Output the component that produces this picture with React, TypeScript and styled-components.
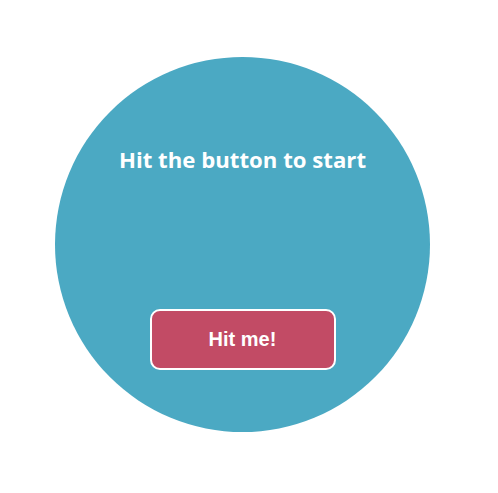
import React from "react";
import styled, { createGlobalStyle } from "styled-components";

const Global = createGlobalStyle`
  html, body { margin: 0; padding: 0; background: #fff; }
`;

const Page = styled.div`
  padding: 57px 0 0 55px;
`;

const Circle = styled.div`
  width: 375px;
  height: 375px;
  border-radius: 50%;
  background: #4ba9c3;
  display: flex;
  flex-direction: column;
  align-items: center;
  box-sizing: border-box;
  padding-top: 88px;
`;

const Title = styled.h1`
  margin: 0;
  font-family: "Open Sans", sans-serif;
  font-weight: 700;
  font-size: 22.2px;
  line-height: 30px;
  color: #fff;
`;

const HitButton = styled.button`
  margin-top: 134px;
  width: 186px;
  height: 61px;
  box-sizing: border-box;
  border: 2px solid #fff;
  border-radius: 10px;
  background: #c24b65;
  color: #fff;
  font-family: "Liberation Sans", Arial, sans-serif;
  font-weight: 700;
  font-size: 20px;
  cursor: pointer;
`;

export default function App() {
  return (
    <Page>
      <Global />
      <Circle>
        <Title>Hit the button to start</Title>
        <HitButton>Hit me!</HitButton>
      </Circle>
    </Page>
  );
}
